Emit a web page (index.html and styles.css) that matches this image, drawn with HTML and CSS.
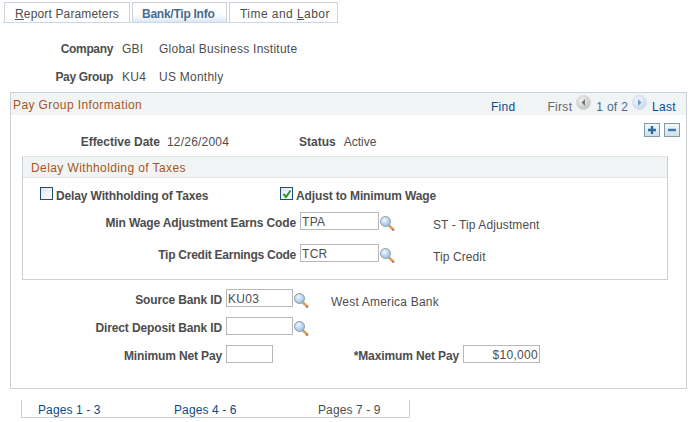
FILE: index.html
```html
<!DOCTYPE html>
<html lang="en">
<head>
    <meta charset="UTF-8">
    <title>Bank/Tip Info</title>
    <link rel="stylesheet" href="styles.css">
</head>
<body>
    <svg class="icon-defs" width="0" height="0">
        <defs>
            <radialGradient id="lens" cx="40%" cy="35%" r="70%">
                <stop offset="0" stop-color="#f2f8fe"/>
                <stop offset="1" stop-color="#8db8e6"/>
            </radialGradient>
            <radialGradient id="roundGrey" cx="40%" cy="35%" r="70%">
                <stop offset="0" stop-color="#f4f4f4"/>
                <stop offset="1" stop-color="#bdbdbd"/>
            </radialGradient>
            <radialGradient id="roundBlue" cx="40%" cy="35%" r="70%">
                <stop offset="0" stop-color="#f6f9fd"/>
                <stop offset="1" stop-color="#c3d3ea"/>
            </radialGradient>
            <linearGradient id="btnFill" x1="0" y1="0" x2="0" y2="1">
                <stop offset="0" stop-color="#f6f9fa"/>
                <stop offset="1" stop-color="#cfdfe4"/>
            </linearGradient>
            <symbol id="lookup" viewBox="0 0 15 15">
                <path d="M9 9.5l4.2 4.2" stroke="#e59b55" stroke-width="2.6" stroke-linecap="round"/>
                <path d="M12.6 13.1l1 1" stroke="#6c86a8" stroke-width="2.2"/>
                <circle cx="5.5" cy="5.5" r="5" fill="url(#lens)" stroke="#8a9ea8"/>
            </symbol>
        </defs>
    </svg>

    <div class="tabs">
        <a class="tab"><u>R</u>eport Parameters</a>
        <a class="tab tab-active">Bank/Tip Info</a>
        <a class="tab">Time and <u>L</u>abor</a>
    </div>

    <div class="summary">
        <div class="summary-row">
            <span class="label summary-label">Company</span>
            <span class="summary-code">GBI</span>
            <span>Global Business Institute</span>
        </div>
        <div class="summary-row">
            <span class="label summary-label">Pay Group</span>
            <span class="summary-code">KU4</span>
            <span>US Monthly</span>
        </div>
    </div>

    <div class="panel">
        <div class="panel-head">
            <span class="panel-title">Pay Group Information</span>
            <div class="nav">
                <a class="link nav-find">Find</a>
                <span class="nav-first">First</span>
                <svg class="nav-btn" width="15" height="15" viewBox="0 0 15 15">
                    <circle cx="7.5" cy="7.5" r="7" fill="url(#roundGrey)" stroke="#d8d8d8"/>
                    <path d="M9 4v7L5.5 7.5z" fill="#777"/>
                </svg>
                <span class="nav-count">1 of 2</span>
                <svg class="nav-btn" width="15" height="15" viewBox="0 0 15 15">
                    <circle cx="7.5" cy="7.5" r="7" fill="url(#roundBlue)" stroke="#d5e0ee"/>
                    <path d="M6 4v7l3.5-3.5z" fill="#6d9ad2"/>
                </svg>
                <a class="link nav-last">Last</a>
            </div>
        </div>

        <div class="row-actions">
            <svg width="16" height="14" viewBox="0 0 16 14">
                <rect x=".5" y=".5" width="15" height="13" fill="url(#btnFill)" stroke="#7d9fa8"/>
                <path d="M8 3v8M4 7h8" stroke="#2f6ca8" stroke-width="2.4"/>
            </svg>
            <svg width="16" height="14" viewBox="0 0 16 14">
                <rect x=".5" y=".5" width="15" height="13" fill="url(#btnFill)" stroke="#7d9fa8"/>
                <path d="M4 7h8" stroke="#3f77b4" stroke-width="2.4"/>
            </svg>
        </div>

        <div class="effective-row">
            <span class="label effective-label">Effective Date</span>
            <span class="effective-date">12/26/2004</span>
            <span class="label status-label">Status</span>
            <span>Active</span>
        </div>

        <div class="delay-box">
            <div class="delay-head">Delay Withholding of Taxes</div>
            <div class="check-row">
                <label class="check check-first">
                    <span class="checkbox"></span>
                    <span class="label">Delay Withholding of Taxes</span>
                </label>
                <label class="check">
                    <span class="checkbox">
                        <svg width="10" height="10" viewBox="0 0 10 10"><path d="M1.5 5l2.5 3 4.5-6.5" fill="none" stroke="#2a9a35" stroke-width="2"/></svg>
                    </span>
                    <span class="label">Adjust to Minimum Wage</span>
                </label>
            </div>
            <div class="field-row wage-row">
                <span class="label wage-label">Min Wage Adjustment Earns Code</span>
                <input class="input input-code" type="text" value="TPA">
                <svg class="lookup" width="15" height="15"><use href="#lookup"/></svg>
                <span class="wage-desc">ST - Tip Adjustment</span>
            </div>
            <div class="field-row wage-row tip-row">
                <span class="label wage-label">Tip Credit Earnings Code</span>
                <input class="input input-code" type="text" value="TCR">
                <svg class="lookup" width="15" height="15"><use href="#lookup"/></svg>
                <span class="wage-desc">Tip Credit</span>
            </div>
        </div>

        <div class="bank-fields">
            <div class="field-row">
                <span class="label bank-label">Source Bank ID</span>
                <input class="input input-bank" type="text" value="KU03">
                <svg class="lookup" width="15" height="15"><use href="#lookup"/></svg>
                <span class="bank-desc">West America Bank</span>
            </div>
            <div class="field-row">
                <span class="label bank-label">Direct Deposit Bank ID</span>
                <input class="input input-bank" type="text">
                <svg class="lookup" width="15" height="15"><use href="#lookup"/></svg>
            </div>
            <div class="field-row">
                <span class="label bank-label">Minimum Net Pay</span>
                <input class="input input-min" type="text">
                <span class="label max-label">*Maximum Net Pay</span>
                <input class="input input-max" type="text" value="$10,000">
            </div>
        </div>
    </div>

    <div class="page-links">
        <a class="link page-one">Pages 1 - 3</a>
        <a class="link page-two">Pages 4 - 6</a>
        <span class="page-three">Pages 7 - 9</span>
    </div>
</body>
</html>
```

FILE: styles.css
```css
body {
    margin: 0;
    font-family: "Liberation Sans", Arial, sans-serif;
    font-size: 12px;
    color: #4d4d4d;
    background-color: #fff;
}
.icon-defs {
    position: absolute;
}
.label {
    font-weight: bold;
    color: #4d4d4d;
    letter-spacing: -.13px;
}
.link {
    color: #0b4a8a;
}

/* tabs */
.tabs {
    display: flex;
    gap: 2px;
    margin: 2px 0 0 3px;
    width: 335px;
    height: 20px;
    border-bottom: 1px solid #c7d9e8;
}
.tab {
    box-sizing: border-box;
    height: 20px;
    line-height: 22px;
    padding: 0 10px;
    border: 1px solid #ccd3db;
    border-bottom: 0;
    letter-spacing: .15px;
    white-space: nowrap;
}
.tab:nth-child(1) {
    width: 126px;
    margin-left: 1px;
}
.tab:nth-child(2) {
    width: 95px;
}
.tab:nth-child(3) {
    width: 109px;
    letter-spacing: .45px;
}
.tab-active {
    font-weight: bold;
    color: #4a6a8c;
    padding-left: 9px;
    letter-spacing: -.25px;
    background: linear-gradient(#fff 60%, #dde8f3);
}

/* company block */
.summary {
    margin-top: 14px;
}
.summary-row {
    display: flex;
    height: 28px;
    line-height: 24px;
    letter-spacing: .25px;
}
.summary-label {
    width: 113px;
    margin-right: 9px;
    text-align: right;
    letter-spacing: -.35px;
}
.summary-code {
    width: 37px;
}

/* main panel */
.panel {
    box-sizing: border-box;
    width: 677px;
    height: 297px;
    margin: -1px 0 0 10px;
    border: 1px solid #ccd0d6;
}
.panel-head {
    display: flex;
    justify-content: space-between;
    height: 22px;
    line-height: 25px;
    background-color: #f0f4f5;
}
.panel-title {
    margin-left: 2px;
    color: #a8541a;
    letter-spacing: .4px;
}
.nav {
    display: flex;
    line-height: 28px;
    letter-spacing: .3px;
}
.nav-find {
    margin-right: 32px;
}
.nav-btn {
    margin: 2px 5px 0 4px;
}
.nav-first {
    color: #666;
}
.nav-count {
    color: #4a6a8c;
}
.nav-last {
    margin-right: 10px;
}
.row-actions {
    display: flex;
    justify-content: flex-end;
    gap: 4px;
    margin: 8px 6px 0 0;
    height: 14px;
}
.effective-row {
    display: flex;
    line-height: 14px;
    margin-top: -2px;
}
.effective-label {
    width: 149px;
    text-align: right;
    margin-right: 7px;
    letter-spacing: 0;
}
.effective-date {
    width: 132px;
    letter-spacing: .2px;
}
.status-label {
    margin-right: 8px;
    letter-spacing: 0;
}

/* delay withholding box */
.delay-box {
    box-sizing: border-box;
    width: 646px;
    height: 124px;
    margin: 7px 0 0 11px;
    border: 1px solid #ccd0d6;
    border-top-color: #e2e6e8;
}
.delay-head {
    box-sizing: border-box;
    height: 21px;
    line-height: 22px;
    padding-left: 8px;
    background-color: #f0f4f5;
    border-bottom: 1px solid #e2e6e8;
    color: #a8541a;
    letter-spacing: .4px;
}
.check-row {
    display: flex;
    margin-top: 9px;
    height: 14px;
}
.check {
    display: flex;
    gap: 3px;
    line-height: 18px;
}
.check-first {
    width: 240px;
    margin-left: 17px;
}
.checkbox {
    box-sizing: border-box;
    display: flex;
    align-items: center;
    justify-content: center;
    width: 13px;
    height: 13px;
    border: 1px solid #1f4e79;
    background: linear-gradient(135deg, #e4e4e4, #fff);
}
.field-row {
    display: flex;
    align-items: center;
    height: 18px;
    margin-bottom: 10px;
}
.field-row .label {
    padding-top: 3px;
}
.wage-row {
    margin: 11px 0 0;
}
.tip-row {
    margin-top: 14px;
}
.tip-row .label {
    letter-spacing: -.25px;
}
.wage-label {
    width: 273px;
    text-align: right;
    margin-right: 4px;
}
.wage-desc {
    margin-left: 38px;
    padding-top: 7px;
    letter-spacing: .1px;
}
.input {
    box-sizing: border-box;
    height: 18px;
    margin: 0;
    padding: 2px 1px 0;
    border: 1px solid #b8b8b8;
    border-radius: 0;
    font-family: inherit;
    font-size: 12px;
    color: #4d4d4d;
    letter-spacing: .3px;
    outline: none;
}
.input-code {
    width: 79px;
}
.lookup {
    margin: 4px 0 0 1px;
    flex: none;
}

/* bank fields */
.bank-fields {
    margin-top: 9px;
}
.bank-label {
    width: 211px;
    text-align: right;
    margin-right: 4px;
}
.input-bank {
    width: 67px;
}
.input-min {
    width: 47px;
}
.bank-desc {
    margin-left: 22px;
    padding-top: 7px;
    letter-spacing: .2px;
}
.max-label {
    width: 186px;
    text-align: right;
    margin-right: 4px;
}
.input-max {
    width: 77px;
    text-align: right;
}

/* bottom links */
.page-links {
    display: flex;
    box-sizing: border-box;
    width: 389px;
    height: 18px;
    margin: 11px 0 0 21px;
    line-height: 21px;
    border: 1px solid #ccd0d6;
    border-top: 0;
    letter-spacing: .1px;
}
.page-one {
    margin-left: 16px;
    width: 136px;
}
.page-two {
    width: 144px;
}
```
